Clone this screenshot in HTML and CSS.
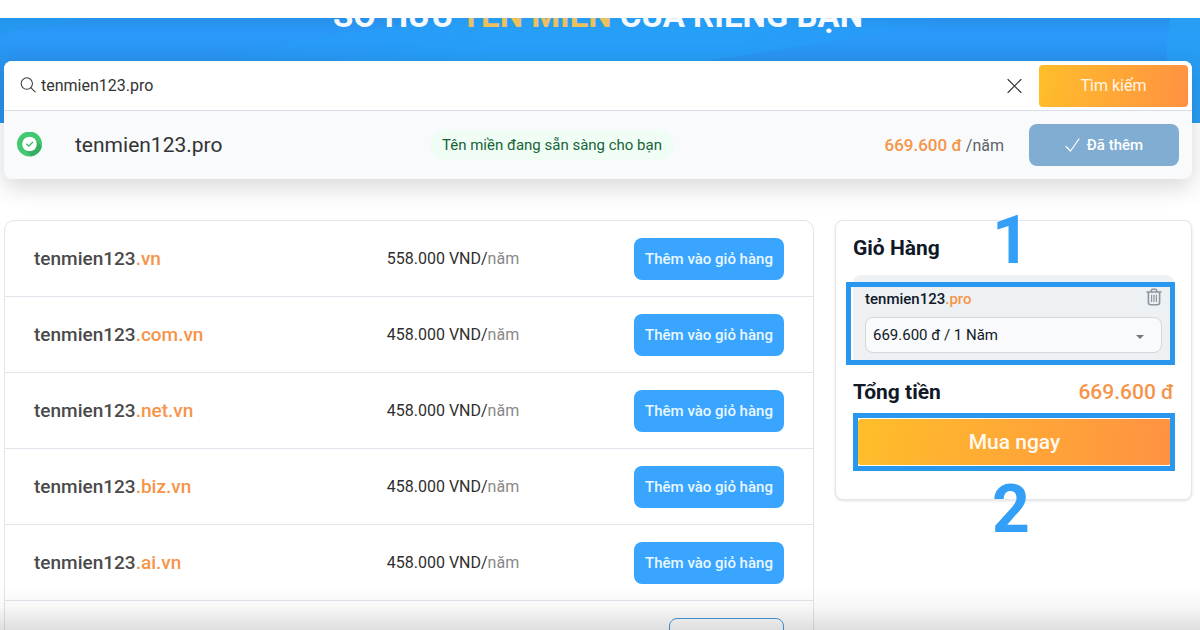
FILE: index.html
```html
<!DOCTYPE html>
<html lang="vi">
<head>
<meta charset="utf-8">
<meta name="viewport" content="width=device-width, initial-scale=1">
<title>Sở hữu tên miền của riêng bạn</title>
<link rel="stylesheet" href="styles.css">
</head>
<body>
<div class="page">
  <div class="topbar"></div>
  <header class="hero">
    <svg class="hero-art" viewBox="0 0 1200 105" preserveAspectRatio="none" aria-hidden="true">
      <defs>
        <linearGradient id="band" x1="0" y1="0" x2="1" y2="0">
          <stop offset="0" stop-color="#259ff8" stop-opacity="0"/>
          <stop offset=".4" stop-color="#26a1f8"/>
          <stop offset=".7" stop-color="#26a1f8"/>
          <stop offset="1" stop-color="#259ff8" stop-opacity="0"/>
        </linearGradient>
      </defs>
      <path d="M0 0H85L0 16Z" fill="#2598ef"/>
      <path d="M170 44L440 0H980L700 44Z" fill="url(#band)"/>
      <path d="M1170 0H1200V105H1174Q1162 40 1170 0Z" fill="#28a0f6"/>
    </svg>
    <h1 class="hero-title">SỞ HỮU <span class="gold">TÊN MIỀN</span> CỦA RIÊNG BẠN</h1>
  </header>

  <main class="content">
    <section class="search-card">
      <form class="search-bar">
        <label class="search-field">
          <svg class="search-icon" viewBox="0 0 18 18" fill="none" stroke="#3c3c3c" stroke-width="1.1" stroke-linecap="round" aria-hidden="true"><circle cx="7.2" cy="6.9" r="6"/><path d="M11.5 11.3L16 15.8"/></svg>
          <input class="search-input" type="text" value="tenmien123.pro" aria-label="Tên miền">
        </label>
        <button class="clear" type="button" aria-label="Xóa">
          <svg viewBox="0 0 18 18" fill="none" stroke="#333" stroke-width="1.1" stroke-linecap="round"><path d="M3 2.5L16 15.5M16 2.5L3 15.5"/></svg>
        </button>
        <button class="search-button" type="button">Tìm kiếm</button>
      </form>
      <div class="result">
        <svg class="ok-icon" viewBox="0 0 26 26" aria-hidden="true">
          <circle cx="12.5" cy="12" r="12.5" fill="#42c870"/>
          <path d="M17.5 6.8L24.8 14.5A12.5 12.5 0 0 1 14.3 24.4L8.5 17.6Z" fill="#37ae64"/>
          <circle cx="12.5" cy="12" r="7.3" fill="#fff"/>
          <path d="M9.4 11.8L11.8 14.1L15.9 10" fill="none" stroke="#37b565" stroke-width="1.3"/>
        </svg>
        <div class="result-name">tenmien123.pro</div>
        <div class="result-state"><span class="badge">Tên miền đang sẵn sàng cho bạn</span></div>
        <div class="result-price"><span class="orange amount">669.600 đ</span> /năm</div>
        <button class="added" type="button">
          <svg class="tick" viewBox="0 0 15 14" fill="none" stroke="#fff" stroke-width="1.2" stroke-linecap="round" stroke-linejoin="round" aria-hidden="true"><path d="M1 8.5L5.5 13L14 1"/></svg>
          Đã thêm
        </button>
      </div>
    </section>

    <div class="columns">
      <section class="domains">
        <table class="domain-table">
          <colgroup><col class="col-name"><col class="col-price"><col class="col-action"></colgroup>
          <tbody>
            <tr><td>tenmien123<span class="ext">.vn</span></td><td class="price">558.000 VND/<span class="unit">năm</span></td><td class="action"><button class="add" type="button">Thêm vào giỏ hàng</button></td></tr>
            <tr><td>tenmien123<span class="ext">.com.vn</span></td><td class="price">458.000 VND/<span class="unit">năm</span></td><td class="action"><button class="add" type="button">Thêm vào giỏ hàng</button></td></tr>
            <tr><td>tenmien123<span class="ext">.net.vn</span></td><td class="price">458.000 VND/<span class="unit">năm</span></td><td class="action"><button class="add" type="button">Thêm vào giỏ hàng</button></td></tr>
            <tr><td>tenmien123<span class="ext">.biz.vn</span></td><td class="price">458.000 VND/<span class="unit">năm</span></td><td class="action"><button class="add" type="button">Thêm vào giỏ hàng</button></td></tr>
            <tr><td>tenmien123<span class="ext">.ai.vn</span></td><td class="price">458.000 VND/<span class="unit">năm</span></td><td class="action"><button class="add" type="button">Thêm vào giỏ hàng</button></td></tr>
            <tr><td></td><td></td><td class="action"><button class="more" type="button" aria-label="Tên miền khác"></button></td></tr>
          </tbody>
        </table>
      </section>

      <aside class="cart">
        <h2 class="cart-title">Giỏ Hàng</h2>
        <div class="cart-item">
          <div class="item-head">
            <span class="item-name">tenmien123<span class="ext">.pro</span></span>
            <button class="remove" type="button" aria-label="Xóa khỏi giỏ">
              <svg viewBox="0 0 16 18" fill="none" stroke="#8e959e" stroke-width="1.6" stroke-linecap="round" stroke-linejoin="round"><path d="M1 4H15M5 3.8Q5.2 1.2 6.6 1.2H9.4Q10.8 1.2 11 3.8M2.4 4.4V14.6Q2.4 16.8 4.6 16.8H11.4Q13.6 16.8 13.6 14.6V4.4"/><path d="M5.6 7V13.6M8 7V13.6M10.4 7V13.6" stroke-width="1.2"/></svg>
            </button>
          </div>
          <div class="term">
            <select class="term-select" aria-label="Thời hạn"><option>669.600 đ / 1 Năm</option></select>
            <svg class="caret" viewBox="0 0 8 4" aria-hidden="true"><path d="M0 0H8L4 4Z" fill="#777"/></svg>
          </div>
          <div class="mark mark-item"></div>
        </div>
        <div class="total"><span>Tổng tiền</span><span class="orange">669.600 đ</span></div>
        <div class="checkout">
          <button class="buy" type="button">Mua ngay</button>
          <div class="mark mark-buy"></div>
        </div>
        <span class="step step-one">1</span>
        <span class="step step-two">2</span>
      </aside>
    </div>
  </main>
  <div class="bottom-shade"></div>
</div>
</body>
</html>
```
FILE: styles.css
```css
* { box-sizing: border-box; }
body { margin: 0; background: #fff; color: #333; font: 16px/24px Roboto, "Noto Sans", sans-serif; }
button, input, select { font: inherit; color: inherit; }
button { border: 0; padding: 0; cursor: pointer; }
.page { position: relative; height: 100vh; overflow: hidden; }
.topbar { height: 18px; }
.hero { position: relative; height: 105px; overflow: hidden; background: linear-gradient(#278fe8 0, #2a98f8 12px, #2a98f8 24px, #2893ee 43px, #2893ee 100%); }
.hero-art { position: absolute; inset: 0; width: 100%; height: 100%; opacity: .8; }
.hero-title { position: relative; margin: -22px 4px 0 0; text-align: center; font-size: 33px; line-height: 40px; font-weight: 700; color: #f6f9fd; }
.gold { color: #ecc05f; }
.orange, .ext { color: #f5954a; }

.content { padding: 0 8px 0 4px; }
.search-card { position: relative; margin-top: -62px; border-radius: 8px; background: #f8fafc; box-shadow: 0 8px 24px rgba(0, 0, 0, .16); }
.search-bar { display: flex; align-items: center; gap: 16px; height: 50px; padding: 0 4px 0 16px; background: #fff; border-bottom: 1px solid #d9dde4; border-radius: 8px 8px 0 0; }
.search-field { display: flex; flex: 1; align-items: center; gap: 4px; }
.search-icon { width: 17px; height: 17px; }
.search-input { flex: 1; min-width: 0; padding: 0; border: 0; outline: 0; background: none; }
.clear { width: 18px; height: 18px; background: none; }
.clear svg { display: block; }
.search-button { width: 149px; height: 42px; border-radius: 4px; background: linear-gradient(100deg, #ffbe2a, #ff9142); color: #fff6e6; }
.result { display: grid; grid-template-columns: 58px 1fr 1fr 1fr 150px; align-items: center; height: 68px; padding: 0 13px; }
.ok-icon { width: 26px; height: 26px; }
.result-name { font-size: 21px; }
.result-state { text-align: center; white-space: nowrap; }
.badge { display: inline-block; padding: 3px 12px; border-radius: 16px; background: #effdf4; color: #17633a; font-size: 15px; }
.result-price { padding-right: 25px; text-align: right; color: #5f6266; }
.amount { font-size: 17px; font-weight: 500; }
.added { display: flex; align-items: center; justify-content: center; gap: 7px; height: 42px; border-radius: 8px; background: #81add3; color: #fff; font-size: 15px; font-weight: 500; }
.tick { width: 15px; height: 14px; }

.columns { display: grid; grid-template-columns: 810fr 357fr; gap: 21px; align-items: start; margin-top: 41px; }
.domains { border: 1px solid #e1e4ea; border-radius: 10px; }
.domain-table { width: 100%; table-layout: fixed; border-collapse: separate; border-spacing: 0; }
.domain-table td { height: 76px; padding: 0; border-bottom: 1px solid #e1e4ea; font-size: 19px; font-weight: 500; color: #4a4a4a; }
.domain-table td:first-child { padding-left: 29px; }
.col-name { width: 47%; }
.col-price { width: 27%; }
.domain-table .price { padding-left: 2px; font-size: 16px; font-weight: 400; color: #2f2f2f; }
.unit { color: #888; }
.domain-table .action { padding-right: 29px; text-align: right; font-size: 16px; }
.domain-table .ext { color: #f5954a; }
.add { display: inline-block; width: 150px; height: 42px; border-radius: 8px; background: #39a5ff; color: #e9f7ff; font-size: 15px; font-weight: 500; vertical-align: middle; }
.more { width: 115px; height: 42px; border: 1px solid #4a9ce4; border-radius: 8px; background: #fff; vertical-align: middle; }

.cart { position: relative; padding: 10px 17px 34px; border: 1px solid #e4e6ea; border-radius: 8px; background: #fff; box-shadow: 0 1px 3px rgba(0, 0, 0, .12); color: #111827; }
.cart-title { margin: 0; font-size: 21px; line-height: 34px; font-weight: 700; }
.cart-item { position: relative; margin-top: 10px; padding: 12px; border-radius: 8px; background: #edf1f4; }
.item-head { display: flex; align-items: center; justify-content: space-between; height: 24px; margin-bottom: 6px; }
.item-name { font-size: 15px; font-weight: 500; }
.remove { width: 16px; height: 24px; background: none; }
.remove svg { display: block; width: 16px; height: 18px; margin-bottom: 4px; }
.term { position: relative; }
.term-select { display: block; appearance: none; width: 100%; height: 36px; padding: 0 7px; border: 1px solid #d4d7dc; border-radius: 8px; background: #f9fafc; font-size: 15px; }
.caret { position: absolute; top: 18px; right: 18px; width: 8px; height: 4px; }
.total { display: flex; justify-content: space-between; margin-top: 13px; font-size: 21px; line-height: 28px; font-weight: 700; }
.total .orange { font-weight: 500; }
.checkout { position: relative; margin-top: 13px; padding: 0 3px 0 5px; }
.buy { display: block; width: 100%; height: 46px; border-radius: 3px; background: linear-gradient(100deg, #ffbe2a, #ff9142); color: #fffaf0; font-size: 21px; font-weight: 500; }
.mark { position: absolute; border: 5px solid #2997ee; pointer-events: none; }
.mark-item { inset: 7px -1px 0 -7px; }
.mark-buy { inset: -6px -1px -6px 0; }
.step { position: absolute; font-size: 66px; line-height: 66px; font-weight: 700; color: #339ff7; }
.step-one { top: -13px; left: 156px; }
.step-two { bottom: -44px; left: 156px; }
.bottom-shade { position: absolute; inset: auto 0 0 0; height: 46px; background: linear-gradient(rgba(0, 0, 0, 0), rgba(0, 0, 0, .03) 50%, rgba(0, 0, 0, .13)); pointer-events: none; }
```
